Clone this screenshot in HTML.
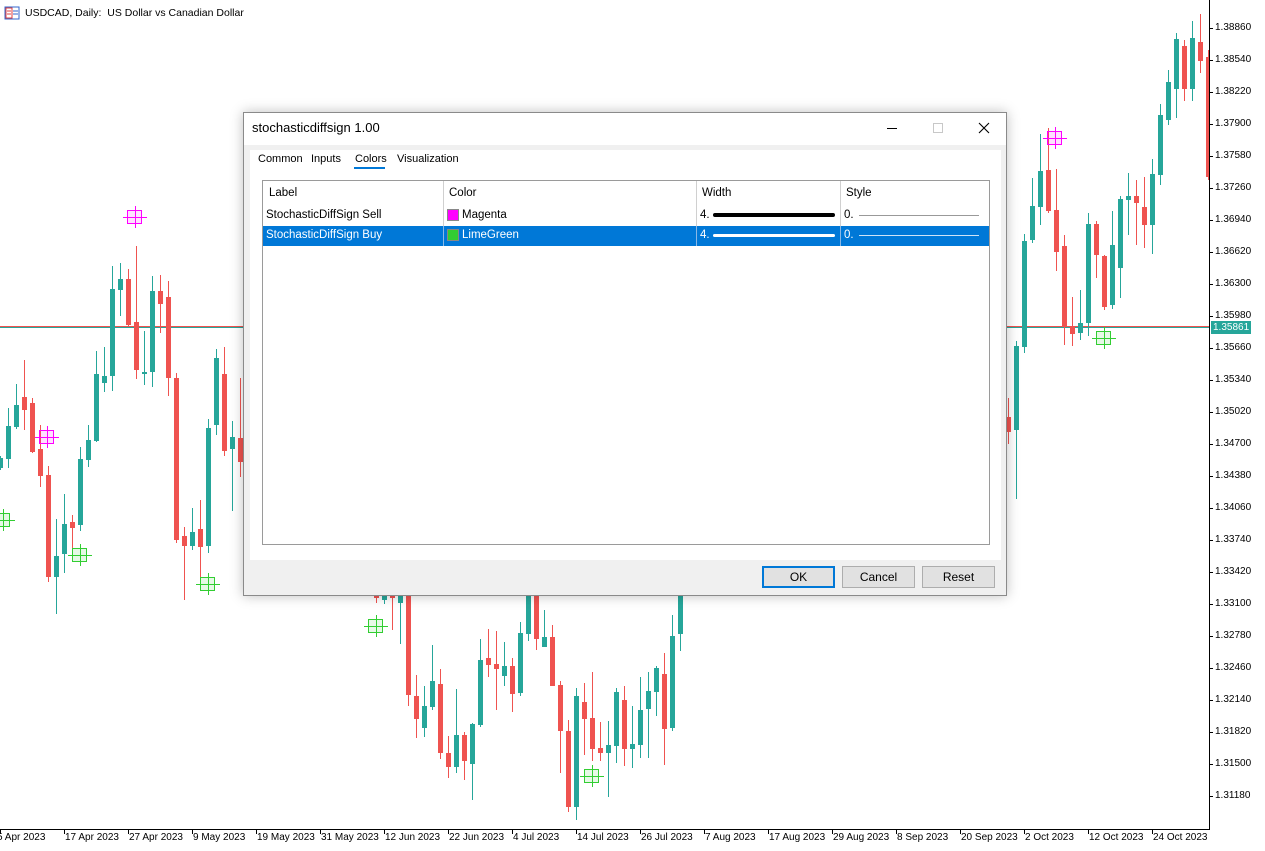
<!DOCTYPE html>
<html><head><meta charset="utf-8"><style>
*{margin:0;padding:0;box-sizing:border-box}
body{width:1265px;height:851px;background:#fff;position:relative;overflow:hidden;font-family:"Liberation Sans","DejaVu Sans",sans-serif;}
#chart{position:absolute;left:0;top:0}
.lbl{position:absolute;font-size:10px;color:#000;white-space:nowrap}
.dlg{position:absolute;left:243px;top:112px;width:764px;height:484px;background:#f0f0f0;border:1px solid #8a8a8a;box-shadow:0 0 12px rgba(0,0,0,.25)}
.title{position:absolute;left:0;top:0;width:100%;height:32px;background:#fff;font-size:13px;line-height:30px;padding-left:8px;color:#000}
.panel{position:absolute;left:6px;top:37px;width:751px;height:410px;background:#fff}
.tab{position:absolute;top:40px;font-size:11px;color:#000}
.grid{position:absolute;left:18px;top:67px;width:728px;height:365px;border:1px solid #9a9a9a;background:#fff}
.cell{position:absolute;font-size:11.5px;white-space:nowrap}
.btn{position:absolute;top:453px;width:73px;height:22px;background:#e1e1e1;border:1px solid #adadad;font-size:12px;text-align:center;line-height:20px}
</style></head><body>
<svg id="chart" width="1265" height="851" xmlns="http://www.w3.org/2000/svg">
<g id="cg"></g>
<line x1="1209.5" y1="0" x2="1209.5" y2="829" stroke="#000"/>
<line x1="0" y1="829.5" x2="1210" y2="829.5" stroke="#000"/>
<g id="ticks"></g>
<rect x="5" y="7" width="14" height="12" fill="#fff" stroke="#3366cc"/>
<rect x="6" y="8" width="6" height="10" fill="#fff" stroke="#e04040" stroke-width="1"/>
<line x1="7" y1="11" x2="11" y2="11" stroke="#e04040"/><line x1="7" y1="14" x2="11" y2="14" stroke="#e04040"/>
<line x1="13" y1="11" x2="18" y2="11" stroke="#3366cc"/><line x1="13" y1="14" x2="18" y2="14" stroke="#3366cc"/>
</svg>
<div class="lbl" style="left:25px;top:7px;font-size:10.5px">USDCAD, Daily:&nbsp; US Dollar vs Canadian Dollar</div>
<div id="axis"></div>
<div class="lbl" style="left:1211px;top:321px;width:40px;height:13px;background:#26a69a;color:#fff;padding-left:2px;line-height:13px">1.35861</div>

<div class="dlg">
<div class="title">stochasticdiffsign 1.00
<svg style="position:absolute;left:640px;top:8px" width="110" height="16">
<line x1="3" y1="7.5" x2="13" y2="7.5" stroke="#000"/>
<rect x="49.5" y="2.5" width="9" height="9" fill="none" stroke="#c8c8c8"/>
<path d="M95 2 L105 12 M105 2 L95 12" stroke="#000" stroke-width="1.1"/>
</svg></div>
<div class="panel"></div>
<div class="tab" style="left:14px">Common</div>
<div class="tab" style="left:67px">Inputs</div>
<div class="tab" style="left:111px">Colors</div>
<div style="position:absolute;left:110px;top:54px;width:31px;height:2px;background:#0078d7"></div>
<div class="tab" style="left:153px">Visualization</div>
<div class="grid">
 <div style="position:absolute;left:180px;top:0;width:1px;height:65px;background:#d0d0d0"></div>
 <div style="position:absolute;left:433px;top:0;width:1px;height:65px;background:#d0d0d0"></div>
 <div style="position:absolute;left:577px;top:0;width:1px;height:65px;background:#d0d0d0"></div>
 <div class="cell" style="left:6px;top:6px">Label</div>
 <div class="cell" style="left:186px;top:6px">Color</div>
 <div class="cell" style="left:439px;top:6px">Width</div>
 <div class="cell" style="left:583px;top:6px">Style</div>
 <div class="cell" style="left:3px;top:28px">StochasticDiffSign Sell</div>
 <div style="position:absolute;left:184px;top:28px;width:12px;height:12px;background:#ff00ff;border:1px solid #888"></div>
 <div class="cell" style="left:199px;top:28px">Magenta</div>
 <div class="cell" style="left:437px;top:28px">4.</div>
 <div style="position:absolute;left:450px;top:32px;width:122px;height:4px;background:#000;border-radius:2px"></div>
 <div class="cell" style="left:581px;top:28px">0.</div>
 <div style="position:absolute;left:596px;top:34px;width:120px;height:1px;background:#999"></div>
 <div style="position:absolute;left:0;top:45px;width:726px;height:20px;background:#0078d7"></div>
 <div style="position:absolute;left:180px;top:45px;width:1px;height:20px;background:#8ab8e6"></div>
 <div style="position:absolute;left:433px;top:45px;width:1px;height:20px;background:#8ab8e6"></div>
 <div style="position:absolute;left:577px;top:45px;width:1px;height:20px;background:#8ab8e6"></div>
 <div class="cell" style="left:3px;top:48px;color:#fff">StochasticDiffSign Buy</div>
 <div style="position:absolute;left:184px;top:48px;width:12px;height:12px;background:#32cd32;border:1px solid #888"></div>
 <div class="cell" style="left:199px;top:48px;color:#fff">LimeGreen</div>
 <div class="cell" style="left:437px;top:48px;color:#fff">4.</div>
 <div style="position:absolute;left:450px;top:53px;width:122px;height:3px;background:#fff;border-radius:2px"></div>
 <div class="cell" style="left:581px;top:48px;color:#fff">0.</div>
 <div style="position:absolute;left:596px;top:54px;width:120px;height:1px;background:#cfe3f7"></div>
</div>
<div class="btn" style="left:518px;border:2px solid #0078d7;line-height:18px">OK</div>
<div class="btn" style="left:598px">Cancel</div>
<div class="btn" style="left:678px">Reset</div>
</div>

<script>
var T="#26a69a",R="#ef5350";
var C=[
[0,468,458,456,470],[8,459,426,408,468],[16,427,405,384,429],[24,397,410,360,430],[32,403,452,398,453],[40,449,476,425,487],[48,475,577,466,582],[56,577,556,519,614],[64,554,524,494,573],[72,522,528,515,553],[80,525,459,447,531],[88,460,440,425,467],[96,441,374,351,442],[104,383,376,347,392],
[112,376,289,266,391],[120,290,279,263,316],[128,279,325,269,327],[136,322,370,246,379],[144,374,372,331,385],[152,372,291,276,387],[160,291,304,275,333],[168,297,378,281,396],[176,378,540,373,543],[184,536,546,527,600],[192,546,532,508,550],[200,529,547,500,580],[208,546,428,419,553],[216,425,358,349,435],[224,374,451,347,456],[232,449,437,421,511],[240,438,462,378,477],
[376,590,598,585,603],[384,600,590,585,604],[392,590,598,585,630],[400,603,590,585,644],[408,590,695,585,706],[416,696,719,675,738],[424,728,706,686,737],[432,707,681,645,710],[440,684,753,669,759],[448,753,767,736,778],[456,767,735,689,773],[464,735,761,732,780],[472,764,724,723,800],[480,725,660,639,727],[488,658,665,629,677],[496,664,669,631,710],[504,676,666,642,686],[512,666,694,658,712],[520,693,633,622,696],[528,634,595,590,641],[536,595,639,590,650],[544,647,637,610,647],[552,637,686,625,686],[560,685,731,681,773],[568,731,807,720,812],[576,807,696,688,820],[584,702,719,683,755],[592,718,749,672,761],[600,748,753,722,761],[608,753,745,721,797],[616,746,692,688,763],[624,700,749,686,766],[632,749,744,706,768],[640,745,710,677,758],[648,709,691,672,758],[656,692,668,666,716],[664,674,729,653,765],[672,728,636,615,731],[680,634,595,590,651],
[1008,417,432,398,444],[1016,430,346,341,499],[1024,347,241,234,353],[1032,240,206,178,243],[1040,207,171,134,225],[1048,170,211,128,213],[1056,210,252,169,271],[1064,246,327,235,345],[1072,326,334,297,346],[1080,333,323,290,340],[1088,323,224,213,336],[1096,224,255,221,278],[1104,256,307,255,310],[1112,305,245,211,309],[1120,268,199,196,298],[1128,200,196,173,235],[1136,196,203,180,245],[1144,207,225,177,248],[1152,225,174,159,254],[1160,175,115,104,185],[1168,120,82,70,125],[1176,89,39,33,118],[1184,46,89,40,101],[1192,89,38,21,101],[1200,42,61,14,73],[1208,57,177,50,180]
];
var s='<defs><clipPath id="cp"><rect x="0" y="0" width="1209" height="829"/></clipPath></defs><g clip-path="url(#cp)">';
s+='<line x1="0" y1="326.5" x2="1209" y2="326.5" stroke="#ef5350"/><line x1="0" y1="327.5" x2="1209" y2="327.5" stroke="#26a69a"/>';
C.forEach(function(c){var x=c[0],o=c[1],cl=c[2],col=cl<o?T:R;var t=Math.min(o,cl),b=Math.max(o,cl);
s+='<line x1="'+(x+.5)+'" y1="'+c[3]+'" x2="'+(x+.5)+'" y2="'+c[4]+'" stroke="'+col+'"/>';
s+='<rect x="'+(x-2)+'" y="'+t+'" width="5" height="'+Math.max(2,b-t)+'" fill="'+col+'"/>';});
function mk(x,y,col){s+='<rect x="'+(x-7.5)+'" y="'+(y-6.5)+'" width="14" height="13" fill="'+col+'" fill-opacity=".12" stroke="'+col+'"/><line x1="'+(x-12)+'" y1="'+(y+.5)+'" x2="'+(x+12)+'" y2="'+(y+.5)+'" stroke="'+col+'"/><line x1="'+(x+.5)+'" y1="'+(y-11)+'" x2="'+(x+.5)+'" y2="'+(y+11)+'" stroke="'+col+'"/>';}
[[47,437],[135,217],[1055,138]].forEach(function(p){mk(p[0],p[1],"#ff00ff")});
[[3,520],[80,555],[208,584],[376,626],[592,776],[1104,338]].forEach(function(p){mk(p[0],p[1],"#32cd32")});
s+='</g>';
var tk='';
for(var i=0;i<19;i++){tk+='<line x1="'+(i*64+.5)+'" y1="829" x2="'+(i*64+.5)+'" y2="834" stroke="#000"/>';}
for(var j=0;j<25;j++){var y=28+j*32.0;tk+='<line x1="1209" y1="'+(y+.5)+'" x2="1213" y2="'+(y+.5)+'" stroke="#000"/>';}
document.getElementById('cg').innerHTML=s;
document.getElementById('ticks').innerHTML=tk;
var P=["1.38860","1.38540","1.38220","1.37900","1.37580","1.37260","1.36940","1.36620","1.36300","1.35980","1.35660","1.35340","1.35020","1.34700","1.34380","1.34060","1.33740","1.33420","1.33100","1.32780","1.32460","1.32140","1.31820","1.31500","1.31180"];
var D=["5 Apr 2023","17 Apr 2023","27 Apr 2023","9 May 2023","19 May 2023","31 May 2023","12 Jun 2023","22 Jun 2023","4 Jul 2023","14 Jul 2023","26 Jul 2023","7 Aug 2023","17 Aug 2023","29 Aug 2023","8 Sep 2023","20 Sep 2023","2 Oct 2023","12 Oct 2023","24 Oct 2023"];
var h='';
P.forEach(function(p,j){if(j==10)h+='<div class="lbl" style="left:1215px;top:'+(342)+'px">'+p+'</div>';else h+='<div class="lbl" style="left:1215px;top:'+(22+j*32)+'px">'+p+'</div>';});
D.forEach(function(d,i){h+='<div class="lbl" style="left:'+(i==0?-3:i*64+1)+'px;top:832px">'+d+'</div>';});
document.getElementById('axis').innerHTML=h;
</script>
</body></html>
